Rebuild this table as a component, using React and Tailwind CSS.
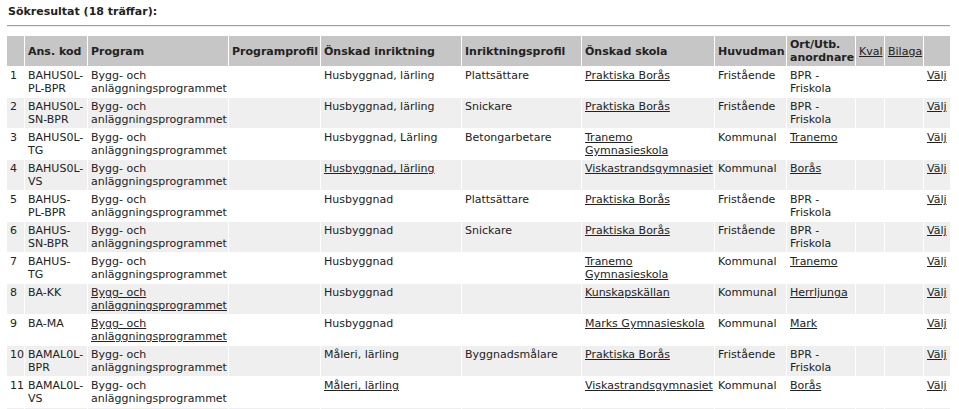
import React from "react";

const L = ({ children }) => <a href="#" className="underline text-[#222]">{children}</a>;

const prog = (
  <>
    Bygg- och
    <br />
    anläggningsprogrammet
  </>
);
const progLink = (
  <L>
    Bygg- och
    <br />
    anläggningsprogrammet
  </L>
);
const bpr = (
  <>
    BPR -
    <br />
    Friskola
  </>
);
const tranemo = (
  <L>
    Tranemo
    <br />
    Gymnasieskola
  </L>
);

const rows = [
  [<>BAHUS0L-<br />PL-BPR</>, prog, "Husbyggnad, lärling", "Plattsättare", <L>Praktiska Borås</L>, "Fristående", bpr],
  [<>BAHUS0L-<br />SN-BPR</>, prog, "Husbyggnad, lärling", "Snickare", <L>Praktiska Borås</L>, "Fristående", bpr],
  [<>BAHUS0L-<br />TG</>, prog, "Husbyggnad, Lärling", "Betongarbetare", tranemo, "Kommunal", <L>Tranemo</L>],
  [<>BAHUS0L-<br />VS</>, prog, <L>Husbyggnad, lärling</L>, "", <L>Viskastrandsgymnasiet</L>, "Kommunal", <L>Borås</L>],
  [<>BAHUS-<br />PL-BPR</>, prog, "Husbyggnad", "Plattsättare", <L>Praktiska Borås</L>, "Fristående", bpr],
  [<>BAHUS-<br />SN-BPR</>, prog, "Husbyggnad", "Snickare", <L>Praktiska Borås</L>, "Fristående", bpr],
  [<>BAHUS-<br />TG</>, prog, "Husbyggnad", "", tranemo, "Kommunal", <L>Tranemo</L>],
  ["BA-KK", progLink, "Husbyggnad", "", <L>Kunskapskällan</L>, "Kommunal", <L>Herrljunga</L>],
  ["BA-MA", progLink, "Husbyggnad", "", <L>Marks Gymnasieskola</L>, "Kommunal", <L>Mark</L>],
  [<>BAMAL0L-<br />BPR</>, prog, "Måleri, lärling", "Byggnadsmålare", <L>Praktiska Borås</L>, "Fristående", bpr],
  [<>BAMAL0L-<br />VS</>, prog, <L>Måleri, lärling</L>, "", <L>Viskastrandsgymnasiet</L>, "Kommunal", <L>Borås</L>],
];

const widths = [17, 62, 140, 91, 140, 119, 132, 71, 68, 28, 38, 26];

export default function App() {
  return (
    <div
      className="h-[409px] overflow-hidden bg-white text-[#222] text-[11px] leading-[13px] pl-[6px] pt-[5px]"
      style={{ fontFamily: '"DejaVu Sans", Verdana, sans-serif' }}
    >
      <h1 className="font-bold text-[11px] leading-[13px] pl-[2px]">Sökresultat (18 träffar):</h1>
      <div className="mt-[7px] ml-[1px] w-[943px] border-t border-t-[#a0a0a0] border-b border-b-[#ececec]" />
      <table className="mt-[8px] w-[945px] table-fixed border-separate border-spacing-[1px]">
        <colgroup>
          {widths.map((w, i) => (
            <col key={i} style={{ width: w }} />
          ))}
        </colgroup>
        <thead>
          <tr className="bg-[#c6c6c6]">
            <th className="p-0" />
            <th className="text-left font-bold px-[3px] py-[2px] whitespace-nowrap">Ans. kod</th>
            <th className="text-left font-bold px-[3px] py-[2px]">Program</th>
            <th className="text-left font-bold px-[3px] py-[2px] whitespace-nowrap">Programprofil</th>
            <th className="text-left font-bold px-[3px] py-[2px] whitespace-nowrap">Önskad inriktning</th>
            <th className="text-left font-bold px-[3px] py-[2px] whitespace-nowrap">Inriktningsprofil</th>
            <th className="text-left font-bold px-[3px] py-[2px] whitespace-nowrap">Önskad skola</th>
            <th className="text-left font-bold px-[3px] py-[2px] whitespace-nowrap">Huvudman</th>
            <th className="text-left font-bold px-[3px] py-[2px] whitespace-nowrap">
              Ort/Utb.
              <br />
              anordnare
            </th>
            <th className="text-left font-normal px-[3px] py-[2px]">
              <L>Kval</L>
            </th>
            <th className="text-left font-normal px-[3px] py-[2px]">
              <L>Bilaga</L>
            </th>
            <th className="p-0" />
          </tr>
        </thead>
        <tbody>
          {rows.map((r, i) => (
            <tr key={i} className={i % 2 === 1 ? "bg-[#efefef]" : "bg-white"}>
              <td className="align-top px-[3px] py-[2px] h-[30px] whitespace-nowrap">{i + 1}</td>
              <td className="align-top px-[3px] py-[2px] whitespace-nowrap">{r[0]}</td>
              <td className="align-top px-[3px] py-[2px] whitespace-nowrap">{r[1]}</td>
              <td className="align-top px-[3px] py-[2px]" />
              <td className="align-top px-[3px] py-[2px] whitespace-nowrap">{r[2]}</td>
              <td className="align-top px-[3px] py-[2px] whitespace-nowrap">{r[3]}</td>
              <td className="align-top px-[3px] py-[2px] whitespace-nowrap">{r[4]}</td>
              <td className="align-top px-[3px] py-[2px] whitespace-nowrap">{r[5]}</td>
              <td className="align-top px-[3px] py-[2px] whitespace-nowrap">{r[6]}</td>
              <td className="align-top px-[3px] py-[2px]" />
              <td className="align-top px-[3px] py-[2px]" />
              <td className="align-top px-[3px] py-[2px] whitespace-nowrap">
                <L>Välj</L>
              </td>
            </tr>
          ))}
          <tr className="bg-[#efefef]">
            {widths.map((_, i) => (
              <td key={i} className="h-[30px] p-0" />
            ))}
          </tr>
        </tbody>
      </table>
    </div>
  );
}
